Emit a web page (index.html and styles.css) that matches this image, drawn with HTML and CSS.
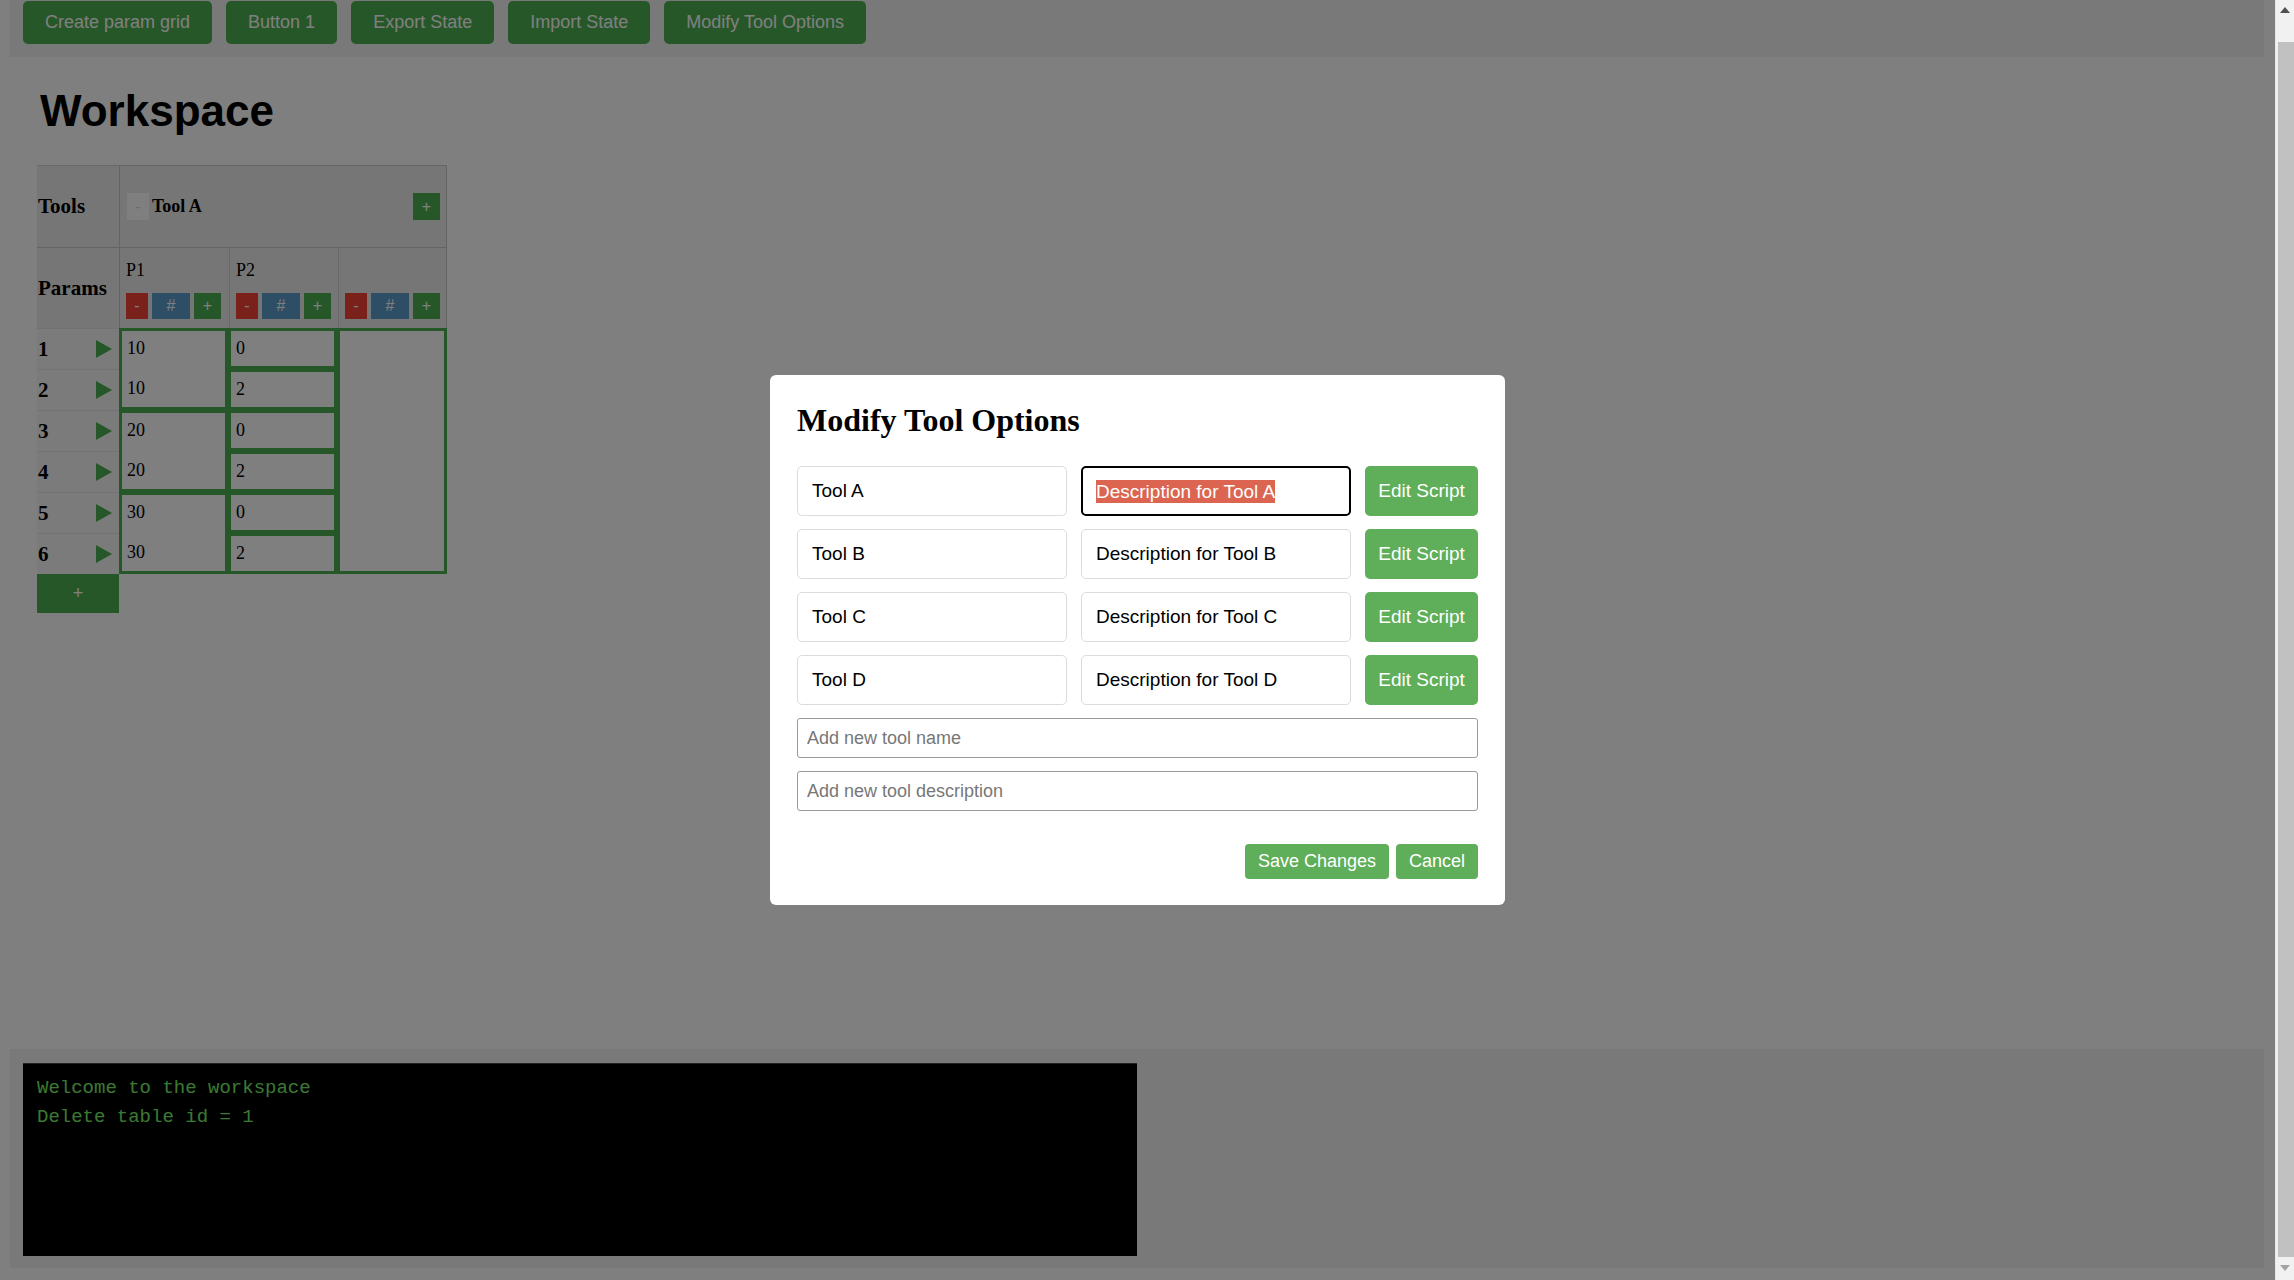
FILE: index.html
```html
<!DOCTYPE html>
<html lang="en">
<head>
<meta charset="utf-8">
<title>Workspace</title>
<link rel="stylesheet" href="styles.css">
</head>
<body>
<div class="toolbar">
  <button class="tb-btn">Create param grid</button>
  <button class="tb-btn">Button 1</button>
  <button class="tb-btn">Export State</button>
  <button class="tb-btn">Import State</button>
  <button class="tb-btn">Modify Tool Options</button>
</div>

<main class="workspace">
  <h1 class="ws-title">Workspace</h1>
  <div class="grid">
    <div class="label-cell head-tools">Tools</div>
    <div class="tool-head">
      <button class="mini gray">-</button>
      <span class="tool-name">Tool A</span>
      <button class="mini green push-right">+</button>
    </div>
    <div class="label-cell head-params">Params</div>
    <div class="param-heads">
      <div class="param-head">
        <div class="pname">P1</div>
        <div class="pbtns"><button class="pb red">-</button><button class="pb blue">#</button><button class="pb green">+</button></div>
      </div>
      <div class="param-head">
        <div class="pname">P2</div>
        <div class="pbtns"><button class="pb red">-</button><button class="pb blue">#</button><button class="pb green">+</button></div>
      </div>
      <div class="param-head">
        <div class="pname">&nbsp;</div>
        <div class="pbtns"><button class="pb red">-</button><button class="pb blue">#</button><button class="pb green">+</button></div>
      </div>
    </div>
    <div class="row-labels">
      <div class="row-label"><span>1</span><svg class="tri" viewBox="0 0 16 18" width="16" height="18"><polygon points="0,0 16,9 0,18"/></svg></div>
      <div class="row-label"><span>2</span><svg class="tri" viewBox="0 0 16 18" width="16" height="18"><polygon points="0,0 16,9 0,18"/></svg></div>
      <div class="row-label"><span>3</span><svg class="tri" viewBox="0 0 16 18" width="16" height="18"><polygon points="0,0 16,9 0,18"/></svg></div>
      <div class="row-label"><span>4</span><svg class="tri" viewBox="0 0 16 18" width="16" height="18"><polygon points="0,0 16,9 0,18"/></svg></div>
      <div class="row-label"><span>5</span><svg class="tri" viewBox="0 0 16 18" width="16" height="18"><polygon points="0,0 16,9 0,18"/></svg></div>
      <div class="row-label"><span>6</span><svg class="tri" viewBox="0 0 16 18" width="16" height="18"><polygon points="0,0 16,9 0,18"/></svg></div>
      <button class="add-row">+</button>
    </div>
    <div class="data">
      <div class="col c1">
        <div class="box two"><div class="val">10</div><div class="val">10</div></div>
        <div class="box two"><div class="val">20</div><div class="val">20</div></div>
        <div class="box two"><div class="val">30</div><div class="val">30</div></div>
      </div>
      <div class="col c2">
        <div class="box one"><div class="val">0</div></div>
        <div class="box one"><div class="val">2</div></div>
        <div class="box one"><div class="val">0</div></div>
        <div class="box one"><div class="val">2</div></div>
        <div class="box one"><div class="val">0</div></div>
        <div class="box one"><div class="val">2</div></div>
      </div>
      <div class="col c3">
        <div class="box all"></div>
      </div>
    </div>
  </div>
</main>

<div class="console-panel">
  <div class="console">
    <div>Welcome to the workspace</div>
    <div>Delete table id = 1</div>
  </div>
</div>

<div class="overlay">
  <div class="modal">
    <h1 class="modal-title">Modify Tool Options</h1>
    <div class="tool-rows">
      <div class="tool-row">
        <input class="field" type="text" value="Tool A">
        <div class="field focused"><span class="sel">Description for Tool A</span></div>
        <button class="edit-btn">Edit Script</button>
      </div>
      <div class="tool-row">
        <input class="field" type="text" value="Tool B">
        <input class="field" type="text" value="Description for Tool B">
        <button class="edit-btn">Edit Script</button>
      </div>
      <div class="tool-row">
        <input class="field" type="text" value="Tool C">
        <input class="field" type="text" value="Description for Tool C">
        <button class="edit-btn">Edit Script</button>
      </div>
      <div class="tool-row">
        <input class="field" type="text" value="Tool D">
        <input class="field" type="text" value="Description for Tool D">
        <button class="edit-btn">Edit Script</button>
      </div>
      <input class="add-field" type="text" placeholder="Add new tool name">
      <input class="add-field" type="text" placeholder="Add new tool description">
    </div>
    <div class="actions">
      <button class="act-btn">Save Changes</button>
      <button class="act-btn">Cancel</button>
    </div>
  </div>
</div>

<div class="scrollbar" aria-hidden="true">
  <div class="sb-up"><svg viewBox="0 0 10 6" width="10" height="6"><polygon points="0,6 5,0 10,6"/></svg></div>
  <div class="sb-thumb"></div>
  <div class="sb-down"><svg viewBox="0 0 10 6" width="10" height="6"><polygon points="0,0 10,0 5,6"/></svg></div>
</div>
</body>
</html>
```

FILE: styles.css
```css
html, body {
  background: #fff;
}

body {
  margin: 0;
  padding: 0 30px 22px 10px;
  font-family: "Liberation Serif", "Times New Roman", serif;
  color: #000;
}

button {
  cursor: pointer;
}

/* ---------- top toolbar ---------- */
.toolbar {
  display: flex;
  gap: 14px;
  padding: 1px 13px 13px;
  background: #f2f2f2;
}

.tb-btn {
  height: 43px;
  padding: 0 22px;
  border: 0;
  border-radius: 5px;
  background: #4caf50;
  color: #fff;
  font: 18px "Liberation Sans", Arial, sans-serif;
}

/* ---------- workspace ---------- */
.workspace {
  display: block;
  height: 992px;
  box-sizing: border-box;
  padding: 29px 0 0 27px;
}

.ws-title {
  margin: 0 0 29px 3px;
  font: bold 44px/50px "Liberation Sans", Arial, sans-serif;
}

.grid {
  display: grid;
  grid-template-columns: 82px 328px;
  grid-template-rows: 82px 81px auto;
  width: 410px;
}

.label-cell {
  display: flex;
  align-items: center;
  padding-left: 1px;
  background: #ececec;
  border-top: 1px solid #d4d4d4;
  font-weight: bold;
  font-size: 21px;
}

.head-params {
  border-top: 1px solid #c8c8c8;
}

.tool-head {
  display: flex;
  align-items: center;
  gap: 3px;
  padding: 0 6px 0 7px;
  background: #ececec;
  border: 1px solid #c8c8c8;
  border-bottom: 0;
}

.tool-name {
  font-weight: bold;
  font-size: 18px;
}

.mini {
  width: 22px;
  height: 27px;
  padding: 0;
  border: 0;
  color: #fff;
  font: 16px "Liberation Sans", Arial, sans-serif;
}

.mini.gray {
  background: #ffffff;
  color: #d8d8d8;
}

.mini.green {
  width: 27px;
  background: #4caf50;
}

.push-right {
  margin-left: auto;
}

.param-heads {
  display: grid;
  grid-template-columns: 109px 109px 110px;
  background: #ececec;
  border-top: 1px solid #c8c8c8;
  border-left: 1px solid #c8c8c8;
  border-right: 1px solid #c8c8c8;
}

.param-head {
  padding: 12px 0 0 6px;
}

.param-head + .param-head {
  border-left: 1px solid #d0d0d0;
}

.pname {
  font-size: 18px;
  line-height: 21px;
}

.pbtns {
  display: flex;
  gap: 4px;
  margin-top: 12px;
}

.pb {
  height: 26px;
  padding: 0;
  border: 0;
  color: #fff;
  font: 16px "Liberation Sans", Arial, sans-serif;
}

.pb.red { width: 22px; background: #f44336; }
.pb.blue { width: 38px; background: #5b9cc9; }
.pb.green { width: 27px; background: #4caf50; }

.row-labels {
  display: flex;
  flex-direction: column;
}

.row-label {
  height: 41px;
  box-sizing: border-box;
  display: flex;
  align-items: center;
  justify-content: space-between;
  padding: 0 7px 0 1px;
  border-top: 1px solid #e4e4e4;
  background: #f7f7f7;
  font-weight: bold;
  font-size: 21px;
}

.tri {
  fill: #4caf50;
}

.add-row {
  height: 39px;
  border: 0;
  background: #4caf50;
  color: #fff;
  font: 18px "Liberation Sans", Arial, sans-serif;
}

.data {
  display: grid;
  grid-template-columns: 109px 109px 110px;
  align-items: start;
}

.col {
  display: flex;
  flex-direction: column;
}

.box {
  box-sizing: border-box;
  border: 3px solid #4caf50;
  padding-left: 5px;
  font-size: 18px;
}

.box.two { height: 82px; }
.box.one { height: 41px; }
.box.all { height: 246px; }

.val {
  height: 40px;
  line-height: 34px;
}

/* ---------- console ---------- */
.console-panel {
  background: #f2f2f2;
  padding: 14px 13px 12px;
}

.console {
  width: 50%;
  height: 193px;
  box-sizing: border-box;
  padding: 10px 14px;
  background: #000;
  border-top: 1px solid #444;
  color: #78f068;
  font: 19px/29px "Liberation Mono", "Courier New", monospace;
}

/* ---------- modal ---------- */
.overlay {
  position: fixed;
  top: 0;
  left: 0;
  bottom: 0;
  right: 19px;
  display: flex;
  align-items: center;
  justify-content: center;
  background: rgba(0, 0, 0, 0.5);
}

.modal {
  width: 735px;
  box-sizing: border-box;
  padding: 27px 27px 26px;
  background: #fff;
  border-radius: 6px;
}

.modal-title {
  margin: 1px 0 28px;
  font: bold 32px/35px "Liberation Serif", "Times New Roman", serif;
}

.tool-rows {
  display: flex;
  flex-direction: column;
  gap: 13px;
}

.tool-row {
  display: flex;
  gap: 14px;
  height: 50px;
}

.field {
  flex: 1;
  min-width: 0;
  height: 50px;
  box-sizing: border-box;
  margin: 0;
  padding: 0 14px;
  border: 1px solid #dcdcdc;
  border-radius: 5px;
  background: #fff;
  color: #000;
  font: 19px "Liberation Sans", Arial, sans-serif;
  outline: none;
}

.field.focused {
  display: flex;
  align-items: center;
  padding: 0 13px;
  border: 2px solid #000;
}

.sel {
  background: #db6550;
  color: #fff;
  line-height: 23px;
  white-space: nowrap;
}

.edit-btn {
  width: 113px;
  height: 50px;
  padding: 0;
  border: 0;
  border-radius: 5px;
  background: #5fae59;
  color: #fff;
  font: 19px "Liberation Sans", Arial, sans-serif;
}

.add-field {
  height: 40px;
  box-sizing: border-box;
  margin: 0;
  padding: 0 9px;
  border: 1px solid #9a9a9a;
  border-radius: 3px;
  background: #fff;
  font: 18px "Liberation Sans", Arial, sans-serif;
  outline: none;
}

.add-field::placeholder {
  color: #777;
}

.actions {
  display: flex;
  justify-content: flex-end;
  gap: 7px;
  margin-top: 33px;
}

.act-btn {
  height: 35px;
  padding: 0 13px;
  border: 0;
  border-radius: 4px;
  background: #5fae59;
  color: #fff;
  font: 18px "Liberation Sans", Arial, sans-serif;
}

/* ---------- browser scrollbar ---------- */
.scrollbar {
  position: fixed;
  top: 0;
  right: 0;
  bottom: 0;
  width: 19px;
  display: flex;
  flex-direction: column;
  background: #f1f1f1;
  border-left: 1px solid #e8e8e8;
  box-sizing: border-box;
}

.sb-up {
  height: 42px;
  display: flex;
  justify-content: center;
  padding-top: 7px;
  box-sizing: border-box;
  fill: #505050;
}

.sb-thumb {
  flex: 1;
  margin-left: 2px;
  background: #c1c1c1;
}

.sb-down {
  height: 23px;
  display: flex;
  justify-content: center;
  padding-top: 8px;
  box-sizing: border-box;
  fill: #a3a3a3;
}
```
